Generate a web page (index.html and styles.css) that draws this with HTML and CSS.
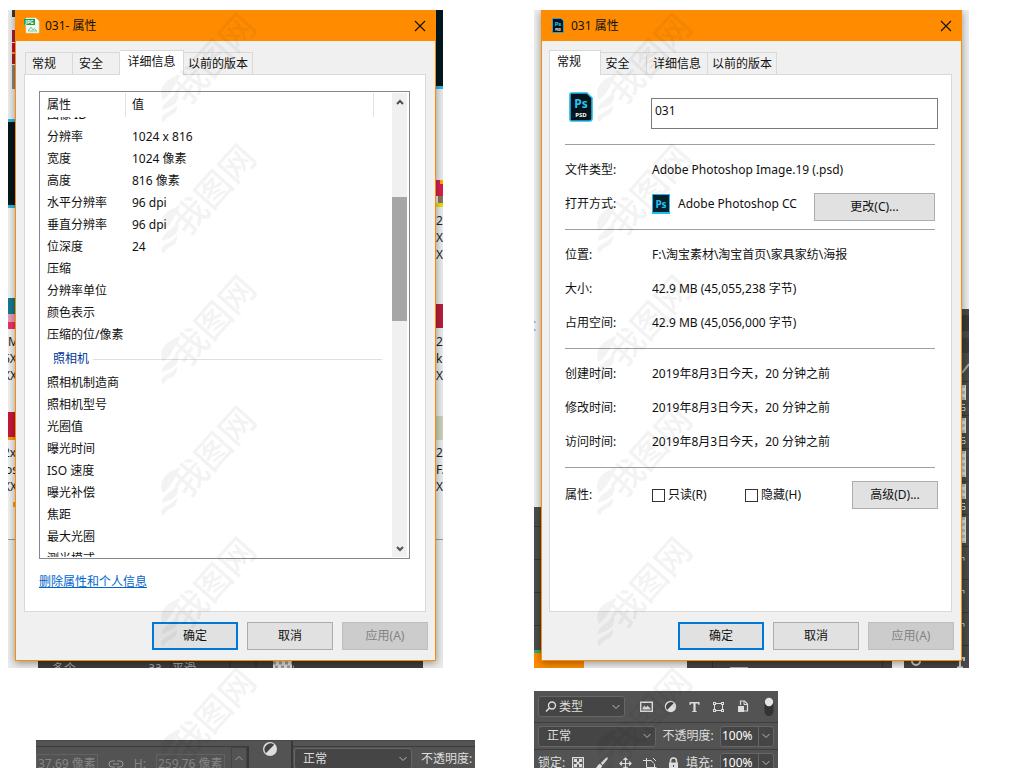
FILE: index.html
```html
<!DOCTYPE html>
<html lang="zh-CN">
<head>
<meta charset="utf-8">
<title>属性</title>
<link rel="stylesheet" href="styles.css">
</head>
<body>
<svg class="defs" aria-hidden="true">
  <symbol id="close" viewBox="0 0 12 12"><path d="M1 1l10 10M11 1L1 11" stroke="#111" stroke-width="1.1" fill="none"/></symbol>
  <symbol id="chev" viewBox="0 0 8 6"><path d="M.5 1L4 4.500L7.500 1" stroke="#b8b8b8" fill="none"/></symbol>
  <symbol id="half" viewBox="0 0 16 16"><circle cx="8" cy="8" r="7" fill="#dedede"/><path d="M3.800 12.200A6 6 0 0 1 12.200 3.800z" fill="#444"/></symbol>
  <symbol id="psd" viewBox="0 0 24 30">
    <path d="M2.500 1H18l5 5v20.500a2.500 2.500 0 0 1-2.500 2.500h-18A1.500 1.500 0 0 1 1 27.500v-25A1.500 1.500 0 0 1 2.500 1z" fill="#04141c" stroke="#1fb8ea" stroke-width="1.600"/>
    <text x="12" y="15.500" text-anchor="middle" font-size="12" font-weight="700" fill="#26c4f5">Ps</text>
    <text x="12" y="25" text-anchor="middle" font-size="6" font-weight="700" fill="#fff">PSD</text>
  </symbol>
</svg>

<main class="desk">
  <section class="shot">
    <svg class="backdrop" viewBox="8 10 435 658" aria-hidden="true">
      <rect x="8" y="10" width="435" height="658" fill="#ebebeb"/>
      <rect x="8" y="208" width="7" height="331" fill="#f0f0f0"/>
      <rect x="12" y="10" width="4" height="7" fill="#3c3630"/>
      <rect x="12" y="30" width="4" height="12" fill="#a3203c"/><rect x="12" y="43" width="4" height="9" fill="#c80f3c"/>
      <rect x="12" y="52" width="4" height="2" fill="#f0a040"/><rect x="12" y="54" width="4" height="10" fill="#a3203c"/>
      <rect x="12" y="65" width="4" height="24" fill="#8c8684"/>
      <rect x="8" y="119" width="8" height="89" fill="#2fb4e4"/><rect x="8" y="122" width="8" height="83" fill="#03171f"/>
      <rect x="8" y="298" width="8" height="16" fill="#127a92"/><rect x="8" y="314" width="8" height="8" fill="#e79ab8"/><rect x="8" y="322" width="8" height="7" fill="#e8326a"/>
      <rect x="8" y="412" width="8" height="25" fill="#c5183c"/><rect x="8" y="437" width="8" height="3" fill="#f3a01a"/>
      <rect x="13" y="502" width="2" height="5" fill="#f3a01a"/>
      <g class="filename"><text x="8" y="346">M</text><text x="3" y="363">6X</text><text x="3" y="380">XX</text><text x="3" y="457">2x</text><text x="5" y="474">os</text><text x="3" y="491">XX</text></g>
      <rect x="436" y="10" width="7" height="76" fill="#03171f"/><rect x="436" y="86" width="7" height="3" fill="#2fb4e4"/>
      <rect x="436" y="180" width="7" height="16" fill="#d81f4e"/><rect x="438" y="196" width="5" height="7" fill="#8a7560"/><rect x="436" y="203" width="7" height="4" fill="#f1dc12"/><rect x="440" y="180" width="3" height="4" fill="#f1b312"/>
      <rect x="436" y="304" width="7" height="24" fill="#b81d3a"/>
      <rect x="436" y="416" width="7" height="24" fill="#cbd2b8"/>
      <g class="filename"><text x="436" y="225">2</text><text x="436" y="242">X</text><text x="436" y="259">X</text><text x="436" y="346">2</text><text x="436" y="363">k</text><text x="436" y="380">X</text><text x="436" y="457">2</text><text x="436" y="474">F.</text><text x="436" y="491">X</text></g>
      <path d="M8 539.500h435" stroke="#9a9a9a"/>
      <rect x="38" y="655" width="385" height="13" fill="#3e3e3e"/>
      <path d="M171 655v13M193 655v13M230 655v13M256 655v13" stroke="#2c2c2c"/>
      <g class="dimname"><text x="52" y="673">多个</text><text x="148" y="671">aa</text><text x="172" y="673">平滑</text></g>
      <rect x="273" y="661" width="19" height="7" fill="#ddd"/><path d="M273 663h19M275 667h19" stroke="#999" stroke-width="3" stroke-dasharray="3 3"/>
    </svg>
    <article class="dialog">
      <header class="title">
        <svg width="16" height="17" viewBox="0 0 16 17" aria-hidden="true"><path d="M2 1h10l3 3v12H2z" fill="#eefaf2" stroke="#bfe5cc" stroke-width=".6"/><path d="M0 2h11v6H0z" fill="#1b9e4b"/><text x="5.500" y="7" text-anchor="middle" font-size="5" font-weight="700" fill="#fff">JPG</text><path d="M4 14l3-4 2 3 1-1.500 3 2.500z" fill="none" stroke="#7cc796"/></svg>
        <h1>031- 属性</h1>
        <button class="close" aria-label="关闭"><svg width="12" height="12"><use href="#close"/></svg></button>
      </header>
      <nav class="tabs">
        <button class="tab short">常规</button><button class="tab short">安全</button><button class="tab mid on">详细信息</button><button class="tab">以前的版本</button>
      </nav>
      <div class="panel details">
        <div class="listbox">
          <div class="list">
            <div class="list-head"><span class="name">属性</span><span class="val">值</span></div>
            <div class="viewport">
              <table>
                <tr><td class="name">图像 ID</td><td></td></tr>
                <tr><td>分辨率</td><td>1024 x 816</td></tr>
                <tr><td>宽度</td><td>1024 像素</td></tr>
                <tr><td>高度</td><td>816 像素</td></tr>
                <tr><td>水平分辨率</td><td>96 dpi</td></tr>
                <tr><td>垂直分辨率</td><td>96 dpi</td></tr>
                <tr><td>位深度</td><td>24</td></tr>
                <tr><td>压缩</td><td></td></tr>
                <tr><td>分辨率单位</td><td></td></tr>
                <tr><td>颜色表示</td><td></td></tr>
                <tr><td>压缩的位/像素</td><td></td></tr>
                <tr class="group"><th colspan="2"><span>照相机</span></th></tr>
                <tr><td>照相机制造商</td><td></td></tr>
                <tr><td>照相机型号</td><td></td></tr>
                <tr><td>光圈值</td><td></td></tr>
                <tr><td>曝光时间</td><td></td></tr>
                <tr><td>ISO 速度</td><td></td></tr>
                <tr><td>曝光补偿</td><td></td></tr>
                <tr><td>焦距</td><td></td></tr>
                <tr><td>最大光圈</td><td></td></tr>
                <tr><td>测光模式</td><td></td></tr>
              </table>
            </div>
          </div>
          <div class="scroll">
            <button aria-label="向上"><svg width="8" height="6"><path d="M1 5l3-3 3 3" stroke="#505050" stroke-width="2" fill="none"/></svg></button>
            <i class="above"></i><i class="thumb"></i><i class="below"></i>
            <button aria-label="向下"><svg width="8" height="6"><path d="M1 1l3 3 3-3" stroke="#505050" stroke-width="2" fill="none"/></svg></button>
          </div>
        </div>
        <a class="remove" href="#">删除属性和个人信息</a>
      </div>
      <footer class="actions"><button class="btn primary">确定</button><button class="btn">取消</button><button class="btn" disabled>应用(A)</button></footer>
    </article>
  </section>

  <section class="shot">
    <svg class="backdrop" viewBox="534 10 435 658" aria-hidden="true">
      <rect x="534" y="10" width="435" height="658" fill="#eee"/>
      <path d="M534 322h1.500M534 330h1.500" stroke="#1f7ab8"/>
      <rect x="534" y="507" width="8" height="143" fill="#4d4d4d"/><path d="M534 526.500h8M534 559.500h8M534 592.500h8M534 625.500h8" stroke="#3a3a3a"/>
      <rect x="534" y="650" width="8" height="3" fill="#2cae78"/><rect x="534" y="653" width="50" height="15" fill="#ff8c00"/>
      <rect x="687" y="655" width="205" height="13" fill="#444"/><path d="M712.500 655v13M882.500 655v13" stroke="#333"/><path d="M730 667.500h18" stroke="#aaa"/>
      <rect x="904" y="655" width="65" height="13" fill="#444"/>
      <rect x="961" y="309" width="8" height="359" fill="#4a4a4a"/>
      <rect x="962" y="315" width="7" height="16" fill="#383838"/><rect x="962" y="338" width="7" height="15" fill="#3c3c3c"/>
      <path d="M962 373l7-9" stroke="#aaa" stroke-width="2"/>
      <path d="M962 381.500h7M962 415.500h7M962 448.500h7M962 481.500h7M962 514.500h7M962 546.500h7M962 579.500h7M962 612.500h7M962 645.500h7" stroke="#363636"/>
      <g fill="#ddd"><rect x="961" y="385" width="5" height="15"/><rect x="961" y="418" width="5" height="15"/><rect x="961" y="451" width="5" height="26"/><rect x="961" y="484" width="5" height="15"/><rect x="961" y="517" width="5" height="26"/></g>
      <path d="M963.500 385v15M963.500 418v15M963.500 451v26M963.500 484v15M963.500 517v26" stroke="#bbb" stroke-width="3" stroke-dasharray="3 3"/>
      <g stroke="#ccc" fill="none"><path d="M961 404.500h4M961 410.500h4v-3h-3M961 437.500h4M961 443.500h4v-3h-3M961 503.500h4M961 509.500h4v-3h-3"/><path d="M961 557.500h3v3M961 590.500h3v3M961 623.500h3v3"/><path d="M955 658h9v3M960 655v12M957 667.500h6" stroke-width="2"/><circle cx="916" cy="661" r="4" stroke-width="2"/></g>
    </svg>
    <article class="dialog">
      <header class="title second">
        <svg width="12" height="15"><use href="#psd"/></svg>
        <h1>031 属性</h1>
        <button class="close" aria-label="关闭"><svg width="12" height="12"><use href="#close"/></svg></button>
      </header>
      <nav class="tabs second">
        <button class="tab short on">常规</button><button class="tab short">安全</button><button class="tab mid">详细信息</button><button class="tab">以前的版本</button>
      </nav>
      <div class="panel general second">
        <div class="file"><svg width="24" height="30" aria-hidden="true"><use href="#psd"/></svg><input type="text" value="031" aria-label="文件名"></div>
        <dl>
          <div><dt>文件类型:</dt><dd>Adobe Photoshop Image.19 (.psd)</dd></div>
          <div><dt>打开方式:</dt><dd><svg width="18" height="20" viewBox="0 0 18 20" aria-hidden="true"><path d="M0 0h18v20H0z" fill="#20bdf0"/><path d="M1 1h16v17H1z" fill="#06202c"/><text x="9" y="14" text-anchor="middle" font-size="10" font-weight="700" fill="#26c4f5">Ps</text></svg><span>Adobe Photoshop CC</span></dd><button class="btn wide">更改(C)...</button></div>
        </dl>
        <dl>
          <div><dt>位置:</dt><dd>F:\淘宝素材\淘宝首页\家具家纺\海报</dd></div>
          <div><dt>大小:</dt><dd>42.9 MB (45,055,238 字节)</dd></div>
          <div><dt>占用空间:</dt><dd>42.9 MB (45,056,000 字节)</dd></div>
        </dl>
        <dl>
          <div><dt>创建时间:</dt><dd>2019年8月3日今天，20 分钟之前</dd></div>
          <div><dt>修改时间:</dt><dd>2019年8月3日今天，20 分钟之前</dd></div>
          <div><dt>访问时间:</dt><dd>2019年8月3日今天，20 分钟之前</dd></div>
        </dl>
        <dl class="attrs">
          <div><dt>属性:</dt><dd><label><input type="checkbox">只读(R)</label><label><input type="checkbox">隐藏(H)</label></dd><button class="btn">高级(D)...</button></div>
        </dl>
      </div>
      <footer class="actions"><button class="btn primary">确定</button><button class="btn">取消</button><button class="btn" disabled>应用(A)</button></footer>
    </article>
  </section>

  <section class="strip">
    <div class="props">
      <div class="dims"><span class="dim">37.69 像素</span><svg width="16" height="8" viewBox="0 0 16 8"><path d="M7 1H4a3 3 0 0 0 0 6h3M9 1h3a3 3 0 0 1 0 6H9M5 4h6" stroke="#999" fill="none"/></svg><span>H:</span><span class="dim">259.76 像素</span></div>
      <button class="up" aria-label="向上"><svg width="8" height="6" viewBox="0 0 8 6"><path d="M.5 5L4 1.500L7.500 5" stroke="#999" fill="none"/></svg></button>
    </div>
    <div class="adjust"><svg width="16" height="16"><use href="#half"/></svg></div>
    <div class="blend">
      <span class="pick"><select aria-label="混合模式"><option>正常</option></select><svg width="8" height="6"><use href="#chev"/></svg></span>
      <span>不透明度:</span>
    </div>
  </section>

  <section class="layers">
    <div class="row types">
      <span class="pick search"><svg class="lens" width="12" height="12" viewBox="0 0 12 12"><circle cx="7" cy="4.500" r="3.500" stroke="#ddd" stroke-width="1.400" fill="none"/><path d="M4.500 7L1 10.500" stroke="#ddd" stroke-width="1.600"/></svg><select aria-label="筛选"><option>类型</option></select><svg width="8" height="6"><use href="#chev"/></svg></span>
      <div class="icons">
        <svg width="13" height="12" viewBox="0 0 13 12"><path d="M.7 1.200h11.600v9H.7z" stroke="#ddd" stroke-width="1.400" fill="none"/><path d="M2.500 8.500V7l2-2.500L6 6.500l1.500-2 3 3v1z" fill="#ddd"/></svg>
        <svg width="13" height="13"><use href="#half"/></svg>
        <svg width="13" height="12" viewBox="0 0 13 12"><path d="M1.500 1h10v3h-1l-.5-1.500H7.600V10l1.400.4V11H4v-.6L5.400 10V2.500H3L2.500 4h-1z" fill="#ddd"/></svg>
        <svg width="13" height="12" viewBox="0 0 13 12"><path d="M2.500 2.500h8v7h-8z" stroke="#ddd" fill="none"/><path d="M1 1h3v3H1zM9 1h3v3H9zM1 8h3v3H1zM9 8h3v3H9z" fill="#ddd"/><path d="M2 2h1v1H2zM10 2h1v1h-1zM2 9h1v1H2zM10 9h1v1h-1z" fill="#505050"/></svg>
        <svg width="13" height="13" viewBox="0 0 13 13"><path d="M4.500 5V1h4l3 3v7H8" stroke="#ddd" stroke-width="1.200" fill="none"/><path d="M8 1v3.500h3.500" stroke="#ddd" fill="none"/><path d="M2 6h6v6H2z" fill="#ddd"/></svg>
      </div>
      <svg class="toggle" width="10" height="20" viewBox="0 0 10 20"><rect x=".5" y="1" width="9" height="18" rx="4.500" fill="#343434"/><circle cx="5" cy="5" r="4.200" fill="#e4e4e4"/></svg>
    </div>
    <div class="row">
      <span class="pick"><select aria-label="混合模式"><option>正常</option></select><svg width="8" height="6"><use href="#chev"/></svg></span>
      <label for="opacity">不透明度:</label>
      <span class="num"><input id="opacity" type="text" value="100%"><button aria-label="不透明度选项"><svg width="8" height="6"><use href="#chev"/></svg></button></span>
    </div>
    <div class="row lock">
      <span>锁定:</span>
      <div class="icons">
        <svg width="12" height="12" viewBox="0 0 12 12"><path d="M.6.600h10.800v10.800H.6z" stroke="#ddd" stroke-width="1.200" fill="none"/><path d="M2 2h3v3H2zM7 2h3v3H7zM4.500 4.500h3v3h-3zM2 7h3v3H2zM7 7h3v3H7z" fill="#ddd"/></svg>
        <svg width="13" height="13" viewBox="0 0 13 13"><path d="M12.800.3L11 .8 5.800 6l1.900 1.900L12.500 2.500zM5.200 6.800c-2.300 0-2 2.600-5 4.600 3.700 1 6.500.2 7-2.600z" fill="#ddd"/></svg>
        <svg width="13" height="13" viewBox="0 0 13 13"><path d="M6.500 1v11M1 6.500h11M4.500 3l2-2 2 2M4.500 10l2 2 2-2M3 4.500l-2 2 2 2M10 4.500l2 2-2 2" stroke="#ddd" stroke-width="1.200" fill="none"/></svg>
        <svg width="14" height="13" viewBox="0 0 14 13"><path d="M0 3.500h8.500M3.500 1v9.500h10M11.500 7v6M10 1l3 3M8 3.500l3 3" stroke="#ddd" fill="none"/></svg>
        <svg width="11" height="13" viewBox="0 0 11 13"><path d="M2.500 6V4a3 3 0 0 1 6 0v2" stroke="#ddd" stroke-width="1.500" fill="none"/><path d="M1 5.500h9V12H1z" fill="#ddd"/><path d="M5 8h1v2H5z" fill="#444"/></svg>
      </div>
      <label for="fill">填充:</label>
      <span class="num"><input id="fill" type="text" value="100%"><button aria-label="填充选项"><svg width="8" height="6"><use href="#chev"/></svg></button></span>
    </div>
  </section>
</main>

<svg class="watermark" aria-hidden="true">
  <defs>
    <pattern id="wm" x="152" y="0" width="436" height="131" patternUnits="userSpaceOnUse">
      <g fill="#000">
        <path d="M11 100C6 90 12 80 25 76c-3 8-2 14-14 24zM10 110c0-8 9-9 16-20 2 14-5 16-16 20zM11 122c-6-8 7-8 14-17 0 9-4 9-9 12-3 2-3 5-5 5z"/>
        <g transform="translate(27 98) rotate(-48)"><text x="0" y="12" font-size="35" font-weight="500">我图网</text></g>
      </g>
    </pattern>
  </defs>
  <rect width="100%" height="100%" fill="url(#wm)"/>
</svg>
</body>
</html>
```
FILE: styles.css
```css
* { box-sizing: border-box; }
body {
  margin: 0;
  height: 100vh;
  overflow: hidden;
  background: #fff;
  color: #111;
  font: 12px/18px "Noto Sans", "Noto Sans CJK SC", sans-serif;
}
button, input, select { font: inherit; color: inherit; margin: 0; }
button { padding: 0; border: 0; background: none; }
svg { display: block; flex: none; }
.defs { position: absolute; width: 0; height: 0; }
.watermark {
  position: absolute;
  inset: 0;
  width: 100%;
  height: 100%;
  opacity: .045;
  pointer-events: none;
}

.desk {
  display: grid;
  grid-template-columns: repeat(2, minmax(0, 1fr));
  column-gap: 91px;
  align-items: start;
  padding: 10px 55px 0 8px;
}
.shot { position: relative; overflow: hidden; padding: 0 7px 7px; }
.backdrop { position: absolute; inset: 0; width: 100%; height: 100%; }
.filename { font-size: 12px; fill: #222; }
.dimname { font-size: 12px; fill: #aaa; }

.dialog {
  position: relative;
  background: #f0f0f0;
  border: 1px solid #ff8c00;
  border-top: 0;
  box-shadow: 0 2px 8px rgba(0, 0, 0, .4);
}
.title {
  display: flex;
  align-items: center;
  gap: 5px;
  height: 31px;
  padding: 0 9px 0 8px;
  background: #ff8c00;
}
.title.second { gap: 7px; padding-left: 10px; }
.title h1 { flex: 1; margin: 0; font-size: 12px; font-weight: 400; }

.tabs { display: flex; align-items: flex-end; height: 33px; padding: 0 9px; }
.tabs.second { padding: 0 7px; }
.tab {
  height: 22px;
  width: 69px;
  border: 1px solid #d9d9d9;
  border-bottom: 0;
  border-left-width: 0;
}
.tab.short { width: 47px; padding-right: 10px; }
.tab.mid { width: 64px; }
.tab:first-child { width: 48px; border-left-width: 1px; }
.second .tab.short { width: 46px; padding-right: 12px; }
.second .tab.mid { width: 61px; }
.tab.on {
  position: relative;
  height: 25px;
  margin-bottom: -1px;
  padding-bottom: 2px;
  background: #fff;
}
.second .tab.on { width: 52px; }

.panel {
  height: 538px;
  margin: 0 9px 0 8px;
  border: 1px solid #d9d9d9;
  background: #fff;
}
.panel.second { margin-left: 7px; }
.details { padding: 16px 15px 0 14px; }
.listbox {
  display: flex;
  height: 468px;
  padding: 1px 2px 1px 0;
  border: 1px solid #828790;
}
.list { flex: 1; display: flex; flex-direction: column; }
.list-head { display: flex; height: 24px; margin-right: 18px; border-right: 1px solid #e2e2e2; line-height: 24px; }
.name { width: 86px; }
.list-head .name { padding-left: 7px; border-right: 1px solid #e2e2e2; }
.list-head .val { padding-left: 6px; }
.viewport { flex: 1; overflow: hidden; height: 0; }
table { width: 100%; margin-top: -13px; border-collapse: collapse; }
td { height: 22px; padding: 0 0 0 6px; line-height: 22px; }
td:first-child { padding-left: 7px; white-space: nowrap; }
th { height: 26px; padding: 0 10px 0 13px; font-weight: 400; line-height: 26px; color: #003399; }
th span { display: flex; align-items: center; gap: 4px; }
th span::after { content: ""; flex: 1; height: 1px; background: #d8e0ea; }
.scroll { display: flex; flex-direction: column; width: 15px; background: #f0f0f0; }
.scroll button { display: grid; place-items: center; height: 17px; }
.scroll .above { flex: 87; }
.scroll .thumb { flex: 124; background: #a6a6a6; }
.scroll .below { flex: 219; }
.remove { display: inline-block; margin-top: 14px; color: #0066cc; }

.actions { display: flex; justify-content: flex-end; gap: 9px; padding: 10px 7px; }
.btn {
  width: 86px;
  height: 28px;
  border: 1px solid #adadad;
  background: #e1e1e1;
}
.btn.primary { border: 2px solid #0078d7; }
.btn:disabled { background: #ccc; border-color: #bfbfbf; color: #838383; }

.general { padding: 17px 16px 0 15px; }
.file { display: flex; height: 52px; padding-left: 4px; gap: 58px; margin-right: -3px; }
.file input {
  flex: 1;
  min-width: 0;
  height: 31px;
  margin-top: 6px;
  padding: 0 3px 6px;
  border: 1px solid #7a7a7a;
  background: #fff;
}
dl { margin: 0; padding: 8px 0; border-top: 1px solid #a0a0a0; }
dl > div { display: flex; align-items: center; height: 34px; }
dt { width: 87px; }
dd { flex: 1; display: flex; align-items: center; gap: 8px; margin: 0; white-space: nowrap; }
dl .btn.wide { width: 121px; align-self: flex-end; margin-right: 0; }
dl .btn { margin-right: -3px; }
.attrs label { display: flex; align-items: center; gap: 3px; width: 85px; }
.attrs > div { height: 38px; }
.attrs input { appearance: none; width: 13px; height: 13px; border: 1px solid #333; background: #fff; }

.strip, .layers { background: #535353; color: #ddd; }
.strip {
  display: flex;
  height: 40px;
  margin: 72px -32px 0 28px;
  border-top: 1px solid #484848;
}
.props { display: flex; width: 213px; margin-top: 5px; border-top: 1px solid #3c3c3c; border-right: 2px solid #383838; }
.dims { flex: 1; display: flex; align-items: center; gap: 10px; height: 34px; overflow: hidden; color: #858585; white-space: nowrap; }
.dim { border: 1px solid #626262; padding: 0 1px; }
.up { display: grid; place-items: center; width: 16px; height: 22px; border: 1px solid #444; }
.adjust { width: 44px; padding-left: 13px; border-right: 2px solid #383838; }
.blend { flex: 1; display: flex; align-items: center; gap: 9px; height: 24px; margin-top: 5px; padding-left: 1px; border-top: 1px solid #3c3c3c; white-space: nowrap; }

.pick {
  display: flex;
  align-items: center;
  width: 118px;
  height: 21px;
  padding: 0 4px 0 8px;
  border: 1px solid #666;
  border-radius: 3px;
  background: #454545;
}
.pick select { flex: 1; min-width: 0; appearance: none; border: 0; padding: 0; background: none; }
.layers { width: 244px; margin-top: 23px; }
.row { display: flex; align-items: center; justify-content: space-between; height: 31px; padding: 0 4px; }
.row + .row { height: 27px; border-top: 1px solid #3e3e3e; }
.pick.search { width: 87px; gap: 2px; padding-left: 6px; }
.icons { display: flex; align-items: center; gap: 11px; }
.num { display: flex; width: 54px; height: 21px; border: 1px solid #666; border-radius: 3px; background: #454545; }
.num input { width: 37px; padding: 0 0 0 1px; border: 0; background: none; color: #fff; }
.num button { flex: 1; display: grid; place-items: center; border-left: 1px solid #666; }
```
